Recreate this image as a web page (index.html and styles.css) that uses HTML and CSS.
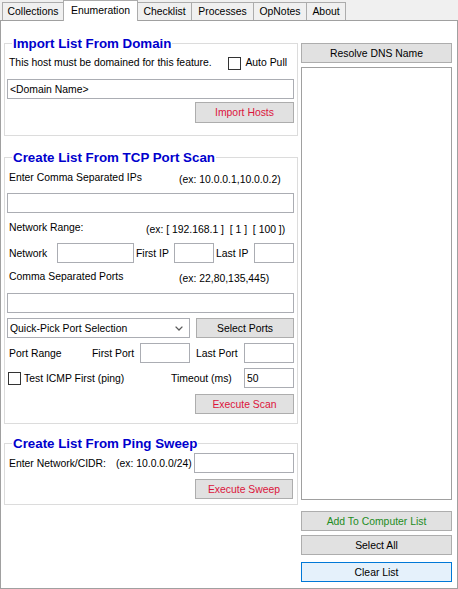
FILE: index.html
```html
<!DOCTYPE html>
<html>
<head>
<meta charset="utf-8">
<title>Enumeration</title>
<link rel="stylesheet" href="styles.css">
</head>
<body>
<div class="tabstrip">
  <div class="tab w-coll">Collections</div>
  <div class="tab selected w-enum">Enumeration</div>
  <div class="tab w-check">Checklist</div>
  <div class="tab w-proc">Processes</div>
  <div class="tab w-op">OpNotes</div>
  <div class="tab w-about">About</div>
</div>
<div class="panel">
  <div class="leftcol">
    <fieldset class="group g1">
      <legend>Import List From Domain</legend>
      <div class="row lblrow g1-r1">
        <span class="lbl">This host must be domained for this feature.</span>
        <span class="checkbox cb-auto"></span>
        <span class="cblabel auto-label">Auto Pull</span>
      </div>
      <input class="textbox full g1-tb" type="text" value="&lt;Domain Name&gt;">
      <div class="row btnrow g1-btn"><button class="btn red w99">Import Hosts</button></div>
    </fieldset>

    <fieldset class="group g2">
      <legend>Create List From TCP Port Scan</legend>
      <div class="row lblrow g2-r1">
        <span class="lbl w172">Enter Comma Separated IPs</span>
        <span class="ex">(ex: 10.0.0.1,10.0.0.2)</span>
      </div>
      <input class="textbox full g2-tb1" type="text" value="">
      <div class="row lblrow g2-r2">
        <span class="lbl w139">Network Range:</span>
        <span class="ex pre">(ex: [ 192.168.1 ]  [ 1 ]  [ 100 ])</span>
      </div>
      <div class="row fieldrow g2-r3">
        <span class="lbl w50">Network</span>
        <input class="textbox w77" type="text" value="">
        <span class="lbl w40">First IP</span>
        <input class="textbox w40" type="text" value="">
        <span class="lbl w40">Last IP</span>
        <input class="textbox w40" type="text" value="">
      </div>
      <div class="row lblrow g2-r4">
        <span class="lbl w172">Comma Separated Ports</span>
        <span class="ex">(ex: 22,80,135,445)</span>
      </div>
      <input class="textbox full g2-tb2" type="text" value="">
      <div class="row fieldrow g2-r5">
        <div class="combo">
          <span class="combo-text">Quick-Pick Port Selection</span>
          <svg class="chev" width="8" height="5" viewBox="0 0 8 5"><path d="M0.6 0.6 L4 4 L7.4 0.6" fill="none" stroke="#5a5a5a" stroke-width="1.3"/></svg>
        </div>
        <button class="btn w98 push-right">Select Ports</button>
      </div>
      <div class="row fieldrow g2-r6">
        <span class="lbl w83">Port Range</span>
        <span class="lbl w50">First Port</span>
        <input class="textbox w50" type="text" value="">
        <span class="lbl w54 pl6">Last Port</span>
        <input class="textbox w50" type="text" value="">
      </div>
      <div class="row fieldrow g2-r7">
        <div class="icmp">
          <span class="checkbox cb-icmp"></span>
          <span class="cblabel">Test ICMP First (ping)</span>
        </div>
        <span class="plain w73">Timeout (ms)</span>
        <input class="textbox w50" type="text" value="50">
      </div>
      <div class="row btnrow g2-btn"><button class="btn red w99">Execute Scan</button></div>
    </fieldset>

    <fieldset class="group g3">
      <legend>Create List From Ping Sweep</legend>
      <div class="row fieldrow g3-r1">
        <span class="lbl w109">Enter Network/CIDR:</span>
        <span class="plain w78">(ex: 10.0.0.0/24)</span>
        <input class="textbox w100" type="text" value="">
      </div>
      <div class="row btnrow g3-btn"><button class="btn red w98 mr1">Execute Sweep</button></div>
    </fieldset>
  </div>

  <div class="rightcol">
    <button class="btn full">Resolve DNS Name</button>
    <div class="listbox"></div>
    <button class="btn full green add-btn">Add To Computer List</button>
    <button class="btn full sel-btn">Select All</button>
    <button class="btn full focus clear-btn">Clear List</button>
  </div>
</div>
</body>
</html>
```

FILE: styles.css
```css
* {
  box-sizing: border-box;
}

html,
body {
  margin: 0;
  padding: 0;
}

body {
  width: 458px;
  height: 589px;
  overflow: hidden;
  background: #f0f0f0;
  font-family: "Liberation Sans", Arial, sans-serif;
  font-size: 10.4px;
  color: #000;
}

/* ---------- tabs ---------- */
.tabstrip {
  display: flex;
  align-items: flex-end;
  height: 20px;
  padding-left: 2px;
}

.tab {
  height: 18px;
  margin-left: -1px;
  border: 1px solid #acacac;
  border-bottom: none;
  background: #f0f0f0;
  display: flex;
  align-items: center;
  justify-content: center;
  font-size: 10.4px;
  line-height: 12px;
  padding-top: 1px;
  white-space: nowrap;
}

.tab:first-child {
  margin-left: 0;
}

.tab.selected {
  height: 21px;
  margin-bottom: -1px;
  background: #fff;
  z-index: 1;
  padding-top: 0;
  padding-bottom: 1px;
}

.w-coll { width: 62px; }
.w-enum { width: 75px; }
.w-check { width: 55px; }
.w-proc { width: 63px; }
.w-op { width: 54px; }
.w-about { width: 40px; }

/* ---------- panel ---------- */
.panel {
  height: 569px;
  border: 1px solid #a0a0a0;
  background: #fff;
  display: flex;
  align-items: flex-start;
  padding: 15px 5px 0 3px;
}

.leftcol {
  width: 294px;
  display: flex;
  flex-direction: column;
}

.rightcol {
  width: 151px;
  margin-left: 3px;
  margin-top: 7px;
  display: flex;
  flex-direction: column;
}

/* ---------- group boxes ---------- */
.group {
  display: block;
  margin: 0;
  min-width: 0;
  border: 1px solid #dcdcdc;
  padding: 0 3px 0 2px;
}

.group legend {
  margin-left: 5px;
  padding: 0 1px;
  font-family: "Liberation Sans", Arial, sans-serif;
  font-weight: bold;
  font-size: 13.33px;
  line-height: 15px;
  color: #0000cd;
  white-space: nowrap;
}

.g1 { padding-bottom: 12px; }
.g2 { margin-top: 14px; padding-bottom: 9px; }
.g3 { margin-top: 12px; padding-bottom: 5px; }

/* ---------- rows ---------- */
.row {
  display: flex;
}

.lblrow {
  height: 16px;
  align-items: flex-start;
  line-height: 16px;
}

.fieldrow {
  height: 20px;
  align-items: center;
}

.btnrow {
  justify-content: flex-end;
}

.g1-r1 { margin-top: 4px; align-items: center; }
.g1-tb { margin-top: 8px; }
.g1-btn { margin-top: 3px; }
.g1-btn .btn { height: 21px; }

.g2-r1 { margin-top: 5px; }
.g2-tb1 { margin-top: 7px; }
.g2-r2 { margin-top: 7px; }
.g2-r3 { margin-top: 7px; }
.g2-r4 { margin-top: 6px; }
.g2-tb2 { margin-top: 8px; }
.g2-r5 { margin-top: 5px; }
.g2-r6 { margin-top: 5px; }
.g2-r7 { margin-top: 5px; }
.g2-btn { margin-top: 6px; }

.g3-r1 { margin-top: 2px; }
.g3-btn { margin-top: 6px; }

/* ---------- labels ---------- */
.lbl {
  padding-left: 2px;
  white-space: nowrap;
  flex: none;
}

.plain {
  white-space: nowrap;
  flex: none;
}

.ex {
  margin-top: 2px;
  white-space: nowrap;
}

.pre {
  white-space: pre;
}

.pl6 { padding-left: 6px; }

.w40 { width: 40px; }
.w50 { width: 50px; }
.w54 { width: 54px; }
.w73 { width: 73px; }
.w77 { width: 77px; }
.w78 { width: 78px; }
.w83 { width: 83px; }
.w98 { width: 98px; }
.w99 { width: 99px; }
.w100 { width: 100px; }
.w109 { width: 109px; }
.w139 { width: 139px; }
.w172 { width: 172px; }

/* ---------- checkbox ---------- */
.checkbox {
  width: 13px;
  height: 13px;
  border: 1px solid #333;
  background: #fff;
  flex: none;
}

.cb-auto {
  margin-left: auto;
}

.cblabel {
  margin-left: 4px;
  white-space: nowrap;
}

.auto-label {
  margin-right: 7px;
}

.icmp {
  width: 164px;
  display: flex;
  align-items: center;
  flex: none;
}

.cb-icmp {
  margin-left: 1px;
}

.icmp .cblabel {
  margin-left: 3px;
}

/* ---------- textbox ---------- */
.textbox {
  display: block;
  height: 20px;
  margin-left: 0;
  margin-right: 0;
  border: 1px solid #abadb3;
  background: #fff;
  padding: 0 2px;
  font-family: "Liberation Sans", Arial, sans-serif;
  font-size: 10.4px;
  color: #000;
  outline: none;
  flex: none;
}

.textbox.full {
  width: 100%;
}

/* ---------- combo ---------- */
.combo {
  width: 183px;
  height: 20px;
  border: 1px solid #abadb3;
  background: #fff;
  display: flex;
  align-items: center;
  padding-left: 2px;
  flex: none;
}

.combo-text {
  white-space: nowrap;
}

.chev {
  margin-left: auto;
  margin-right: 6px;
  display: block;
}

/* ---------- buttons ---------- */
.btn {
  height: 20px;
  margin: 0;
  padding: 0;
  border: 1px solid #adadad;
  background: #e1e1e1;
  font-family: "Liberation Sans", Arial, sans-serif;
  font-size: 10.4px;
  color: #000;
  text-align: center;
  flex: none;
}

.btn.push-right {
  margin-left: auto;
}

.btn.mr1 {
  margin-right: 1px;
}

.btn.full {
  width: 100%;
}

.btn.red {
  color: #dc143c;
}

.btn.green {
  color: #1e8c1e;
}

.btn.focus {
  background: #e5f1fb;
  border-color: #0078d7;
}

.listbox {
  margin-top: 4px;
  height: 433px;
  border: 1px solid #a0a0a0;
  background: #fff;
}

.add-btn { margin-top: 11px; }
.sel-btn { margin-top: 4px; }
.clear-btn { margin-top: 7px; }
```
